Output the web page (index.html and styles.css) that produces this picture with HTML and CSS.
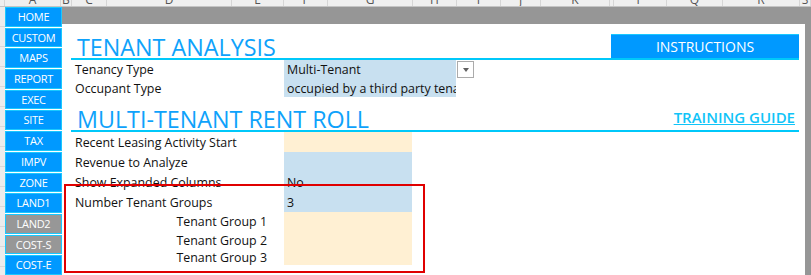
FILE: index.html
```html
<!DOCTYPE html>
<html lang="en">
<head>
    <meta charset="UTF-8">
    <title>Tenant Analysis</title>
    <link rel="stylesheet" href="styles.css">
</head>
<body>
    <div class="sheet">
        <div class="colhead">
            <div></div><div>A</div><div>B</div><div>C</div><div>D</div><div>E</div><div>F</div><div>G</div>
            <div>H</div><div>I</div><div>J</div><div>K</div><div></div><div>P</div><div>Q</div><div>R</div><div>S</div>
        </div>
        <div class="frame">
            <div class="rowhead"></div>
            <nav class="nav">
                <a class="navbtn">HOME</a>
                <a class="navbtn">CUSTOM</a>
                <a class="navbtn">MAPS</a>
                <a class="navbtn">REPORT</a>
                <a class="navbtn">EXEC</a>
                <a class="navbtn">SITE</a>
                <a class="navbtn">TAX</a>
                <a class="navbtn">IMPV</a>
                <a class="navbtn">ZONE</a>
                <a class="navbtn">LAND1</a>
                <a class="navbtn off">LAND2</a>
                <a class="navbtn off">COST-S</a>
                <a class="navbtn">COST-E</a>
            </nav>
            <div class="main">
                <div class="band"></div>
                <div class="page">
                    <div class="content">
                        <div class="title-row first">
                            <h1 class="title">TENANT ANALYSIS</h1>
                            <a class="instructions">INSTRUCTIONS</a>
                        </div>
                        <div class="fields tenancy">
                            <div class="label">Tenancy Type</div>
                            <div class="cell blue">Multi-Tenant</div>
                            <div class="dropdown"><span class="caret"></span></div>
                            <div class="label">Occupant Type</div>
                            <div class="cell blue">occupied by a third party tenant</div>
                            <div></div>
                        </div>
                        <div class="title-row second">
                            <h1 class="title">MULTI-TENANT RENT ROLL</h1>
                            <a class="guide">TRAINING GUIDE</a>
                        </div>
                        <div class="fields rentroll">
                            <div class="label">Recent Leasing Activity Start</div>
                            <div class="cell peach"></div>
                            <div class="label">Revenue to Analyze</div>
                            <div class="cell blue"></div>
                            <div class="label">Show Expanded Columns</div>
                            <div class="cell blue">No</div>
                            <div class="label">Number Tenant Groups</div>
                            <div class="cell blue">3</div>
                            <div class="label sub">Tenant Group 1</div>
                            <div class="cell peach"></div>
                            <div class="label sub">Tenant Group 2</div>
                            <div class="cell peach"></div>
                            <div class="label sub">Tenant Group 3</div>
                            <div class="cell peach"></div>
                        </div>
                        <div class="highlight"></div>
                    </div>
                    <div class="edge"></div>
                </div>
            </div>
        </div>
    </div>
</body>
</html>
```

FILE: styles.css
```css
body {
    margin: 0;
    font-family: 'Open Sans', sans-serif;
    background: #ffffff;
}

.sheet {
    width: 811px;
    height: 275px;
    overflow: hidden;
}

.colhead {
    display: grid;
    grid-template-columns: 5px 56px 11px 35px 125px 52px 44px 85px 44px 44px 40px 69px 4px 53px 56px 77px 11px;
    height: 6px;
    overflow: hidden;
    background: #efefef;
    border-bottom: 1px solid #c4c4c4;
}

.colhead div {
    border-right: 1px solid #d6d6d6;
    text-align: center;
    font-size: 12px;
    line-height: 0;
    color: #555;
}

.frame {
    display: flex;
    height: 268px;
}

.rowhead {
    width: 5px;
    background: repeating-linear-gradient(#ececec 0 19px, #d8d8d8 19px 20px);
}

.nav {
    width: 57px;
    display: flex;
    flex-direction: column;
    gap: 1px;
    background: #ffffff;
}

.navbtn {
    height: 17.7px;
    line-height: 17.7px;
    background: #0099ff;
    border: 1px solid #19c8ff;
    color: #ffffff;
    font-size: 11px;
    text-align: center;
    letter-spacing: -0.3px;
    cursor: pointer;
}

.navbtn.off {
    background: #979797;
}

.main {
    flex: 1;
    display: flex;
    flex-direction: column;
}

.band {
    height: 17px;
    background: #969696;
}

.page {
    flex: 1;
    display: flex;
}

.content {
    position: relative;
    flex: 1;
    background: #ffffff;
}

.edge {
    width: 6px;
    background: #969696;
}

.title-row {
    display: flex;
    justify-content: space-between;
    margin: 0 6px 0 9px;
    border-bottom: 2px solid #00c8fa;
}

.title-row.first {
    height: 34px;
}

.title-row.second {
    height: 33px;
}

.title {
    margin: 0;
    padding: 12px 0 0 6px;
    font-size: 23.3px;
    font-weight: 400;
    line-height: 22px;
    color: #0ea2fb;
}

.second .title {
    line-height: 21px;
}

.instructions {
    align-self: flex-end;
    width: 188px;
    height: 23px;
    line-height: 23px;
    background: #0099ff;
    border-top: 1px solid #19c8ff;
    color: #ffffff;
    font-size: 14px;
    text-align: center;
}

.guide {
    align-self: flex-end;
    margin: 0 4px 4px 0;
    font-size: 15px;
    font-weight: 600;
    line-height: 18px;
    color: #10c4f8;
    text-decoration: underline;
}

.fields {
    display: grid;
    margin-left: 9px;
    font-size: 12.4px;
    color: #111;
}

.fields.tenancy {
    grid-template-columns: 213px 172px 17px;
    grid-template-rows: 19px 18px;
}

.fields.rentroll {
    grid-template-columns: 213px 128px;
    grid-template-rows: 20px 20px 20px 20px 19px 18px 16px;
}

.label {
    display: flex;
    align-items: center;
    padding-left: 4px;
    white-space: nowrap;
}

.label.sub {
    justify-content: flex-end;
    padding: 0 17px 0 0;
}

.cell {
    display: flex;
    align-items: center;
    padding-left: 3px;
    white-space: nowrap;
    overflow: hidden;
}

.blue {
    background: #c8e0f0;
}

.peach {
    background: #fff0d3;
}

.dropdown {
    width: 15px;
    height: 15px;
    margin: 1px 0 0 1px;
    border: 1px solid #ababab;
    background: #ffffff;
    display: flex;
    align-items: center;
    justify-content: center;
}

.caret {
    width: 0;
    height: 0;
    border-left: 3.5px solid transparent;
    border-right: 3.5px solid transparent;
    border-top: 4px solid #606060;
}

.highlight {
    position: absolute;
    left: 2px;
    top: 160px;
    width: 357px;
    height: 85px;
    border: 2px solid #e00000;
}
```
